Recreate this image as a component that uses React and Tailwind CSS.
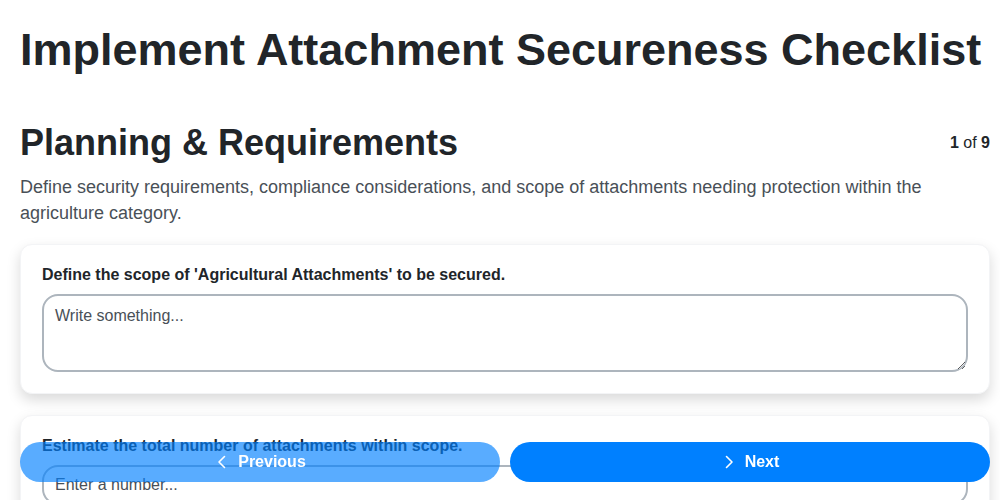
import React, { useState } from 'react';

const font = { fontFamily: '"Liberation Sans", Arial, sans-serif' };

function ChevronLeft() {
  return (
    <svg width="16" height="16" viewBox="0 0 16 16" fill="none" stroke="currentColor" strokeWidth="1.6" strokeLinecap="round" strokeLinejoin="round">
      <path d="M10.5 2.5 5 8l5.5 5.5" />
    </svg>
  );
}

function ChevronRight() {
  return (
    <svg width="16" height="16" viewBox="0 0 16 16" fill="none" stroke="currentColor" strokeWidth="1.6" strokeLinecap="round" strokeLinejoin="round">
      <path d="M5.5 2.5 11 8l-5.5 5.5" />
    </svg>
  );
}

function QuestionCard({ label, children }) {
  return (
    <div className="bg-white rounded-xl border border-gray-100 shadow-[0_6px_14px_rgba(0,0,0,0.15)] px-[21px] pt-[18px] pb-[21px]">
      <label className="block text-[16px] font-bold text-[#212529] mb-[7px]">{label}</label>
      {children}
    </div>
  );
}

export default function App() {
  const [scope, setScope] = useState('');
  const [count, setCount] = useState('');

  return (
    <div className="min-h-screen bg-white text-[#212529] pl-5 pr-[10px]" style={font}>
      <h1 className="text-[45px] font-bold leading-tight pt-[22px] mb-[42px] whitespace-nowrap">
        Implement Attachment Secureness Checklist
      </h1>

      <div className="flex items-start justify-between">
        <h2 className="text-[36px] font-bold leading-tight">Planning &amp; Requirements</h2>
        <div className="text-[16px] mt-[11px]">
          <span className="font-bold">1</span> of <span className="font-bold">9</span>
        </div>
      </div>

      <p className="text-[18px] leading-[26px] text-[#495057] mt-[9px] mb-[18px]">
        Define security requirements, compliance considerations, and scope of attachments needing protection within the agriculture category.
      </p>

      <div className="flex flex-col gap-[21px] pb-24">
        <QuestionCard label="Define the scope of 'Agricultural Attachments' to be secured.">
          <textarea
            value={scope}
            onChange={(e) => setScope(e.target.value)}
            placeholder="Write something..."
            className="block w-full h-[78px] border-2 border-[#adb5bd] rounded-2xl px-[11px] py-[8px] text-[16px] placeholder:text-[#495057] focus:outline-none"
            style={font}
          />
        </QuestionCard>

        <QuestionCard label="Estimate the total number of attachments within scope.">
          <input
            type="number"
            value={count}
            onChange={(e) => setCount(e.target.value)}
            placeholder="Enter a number..."
            className="block w-full h-[40px] border-2 border-[#adb5bd] rounded-2xl px-[11px] text-[16px] placeholder:text-[#495057] focus:outline-none"
            style={font}
          />
        </QuestionCard>
      </div>

      <div className="fixed bottom-[18px] left-5 right-[10px] flex gap-[10px]">
        <button className="flex-1 h-10 rounded-full bg-[#0080ff]/65 text-white font-bold text-[16px] flex items-center justify-center gap-[8px]">
          <ChevronLeft /> Previous
        </button>
        <button className="flex-1 h-10 rounded-full bg-[#0080ff] text-white font-bold text-[16px] flex items-center justify-center gap-[8px]">
          <ChevronRight /> Next
        </button>
      </div>
    </div>
  );
}
